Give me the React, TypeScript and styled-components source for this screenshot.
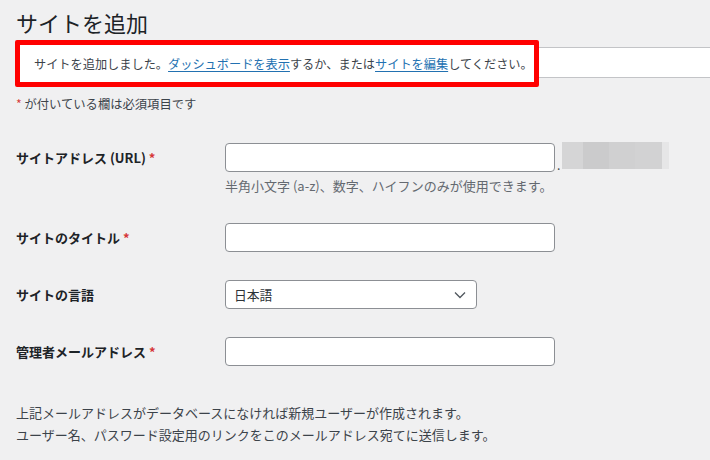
import React from "react";
import styled, { createGlobalStyle } from "styled-components";

const GlobalStyle = createGlobalStyle`
  html, body {
    margin: 0;
    padding: 0;
    background: #f0f0f1;
  }
  body {
    font-family: "Noto Sans CJK JP", "Noto Sans", sans-serif;
    color: #3c434a;
    font-size: 12px;
    overflow: hidden;
  }
`;

const Page = styled.div`
  width: 710px;
  height: 460px;
  padding-left: 16px;
  box-sizing: border-box;
  overflow: hidden;
`;

const Title = styled.h1`
  margin: 9px 0 0 0;
  font-size: 22px;
  line-height: 27px;
  font-weight: 400;
  color: #1d2327;
`;

const NoticeArea = styled.div`
  position: relative;
  margin: 4px 0 0 -1px;
  height: 47px;
`;

const NoticeBar = styled.div`
  position: absolute;
  left: 5px;
  right: 0;
  top: 7px;
  bottom: 9px;
  background: #fff;
  border-top: 1px solid #c3c4c7;
  border-bottom: 1px solid #c3c4c7;
`;

const Highlight = styled.div`
  position: relative;
  box-sizing: border-box;
  width: 524px;
  height: 47px;
  border: 5px solid #ff0000;
  border-radius: 2px;
  background: #fff;
  display: flex;
  align-items: center;
  padding-left: 14px;
  font-size: 12.2px;
  color: #3c434a;
  white-space: nowrap;
`;

const Link = styled.a`
  color: #2271b1;
  text-decoration: underline;
  text-underline-offset: 2px;
`;

const Required = styled.span`
  color: #d63638;
`;

const RequiredNote = styled.p`
  margin: 8px 0 0 0;
  font-size: 12.3px;
  line-height: 18px;
  color: #3c434a;
`;

const Form = styled.div`
  margin-top: 16px;
  display: flex;
  flex-direction: column;
`;

const Row = styled.div`
  display: flex;
  align-items: flex-start;
  padding: 14px 0;
`;

const Label = styled.div`
  width: 209px;
  flex: none;
  font-size: 13px;
  line-height: 29px;
  font-weight: 700;
  color: #1d2327;
`;

const Field = styled.div`
  display: flex;
  flex-direction: column;
`;

const InputLine = styled.div`
  display: flex;
  align-items: flex-start;
`;

const TextInput = styled.div<{ $w?: number }>`
  box-sizing: border-box;
  width: ${(p) => p.$w ?? 330}px;
  height: 29px;
  background: #fff;
  border: 1px solid #8c8f94;
  border-radius: 4px;
`;

const Dot = styled.span`
  font-size: 12px;
  line-height: 12px;
  margin: 16px 0 0 2px;
  color: #3c434a;
`;

const Blur = styled.div`
  display: flex;
  height: 27px;
  margin: -1px 0 0 2px;
`;

const BlurCell = styled.div<{ $c: string; $w: number }>`
  width: ${(p) => p.$w}px;
  background: ${(p) => p.$c};
  filter: blur(0.5px);
`;

const Description = styled.p`
  margin: 5px 0 0 0;
  font-size: 13px;
  line-height: 18px;
  color: #646970;
`;

const Select = styled.div`
  box-sizing: border-box;
  width: 252px;
  height: 29px;
  background: #fff;
  border: 1px solid #8c8f94;
  border-radius: 4px;
  display: flex;
  align-items: center;
  justify-content: space-between;
  padding: 0 10px 0 8px;
  font-size: 12.8px;
  color: #2c3338;
`;

const Footer = styled.div`
  margin-top: 22px;
  font-size: 13px;
  line-height: 22px;
  color: #3c434a;
`;

const Chevron = () => (
  <svg width="12" height="8" viewBox="0 0 12 8">
    <polyline points="1,1.5 6,6.5 11,1.5" fill="none" stroke="#50575e" strokeWidth="1.3" />
  </svg>
);

export default function App() {
  return (
    <>
      <GlobalStyle />
      <Page>
        <Title>サイトを追加</Title>
        <NoticeArea>
          <NoticeBar />
          <Highlight>
            サイトを追加しました。<Link>ダッシュボードを表示</Link>するか、または<Link>サイトを編集</Link>してください。
          </Highlight>
        </NoticeArea>
        <RequiredNote>
          <Required>*</Required> が付いている欄は必須項目です
        </RequiredNote>
        <Form>
          <Row>
            <Label>
              サイトアドレス (URL) <Required>*</Required>
            </Label>
            <Field>
              <InputLine>
                <TextInput />
                <Dot>.</Dot>
                <Blur>
                  <BlurCell $c="#d5d5d6" $w={21} />
                  <BlurCell $c="#cbcbcc" $w={26} />
                  <BlurCell $c="#d0d0d1" $w={26} />
                  <BlurCell $c="#d2d2d3" $w={27} />
                  <BlurCell $c="#e6e6e7" $w={7} />
                </Blur>
              </InputLine>
              <Description>半角小文字 (a-z)、数字、ハイフンのみが使用できます。</Description>
            </Field>
          </Row>
          <Row>
            <Label>
              サイトのタイトル <Required>*</Required>
            </Label>
            <Field>
              <TextInput />
            </Field>
          </Row>
          <Row>
            <Label>サイトの言語</Label>
            <Field>
              <Select>
                <span>日本語</span>
                <Chevron />
              </Select>
            </Field>
          </Row>
          <Row>
            <Label>
              管理者メールアドレス <Required>*</Required>
            </Label>
            <Field>
              <TextInput />
            </Field>
          </Row>
        </Form>
        <Footer>
          上記メールアドレスがデータベースになければ新規ユーザーが作成されます。
          <br />
          ユーザー名、パスワード設定用のリンクをこのメールアドレス宛てに送信します。
        </Footer>
      </Page>
    </>
  );
}
